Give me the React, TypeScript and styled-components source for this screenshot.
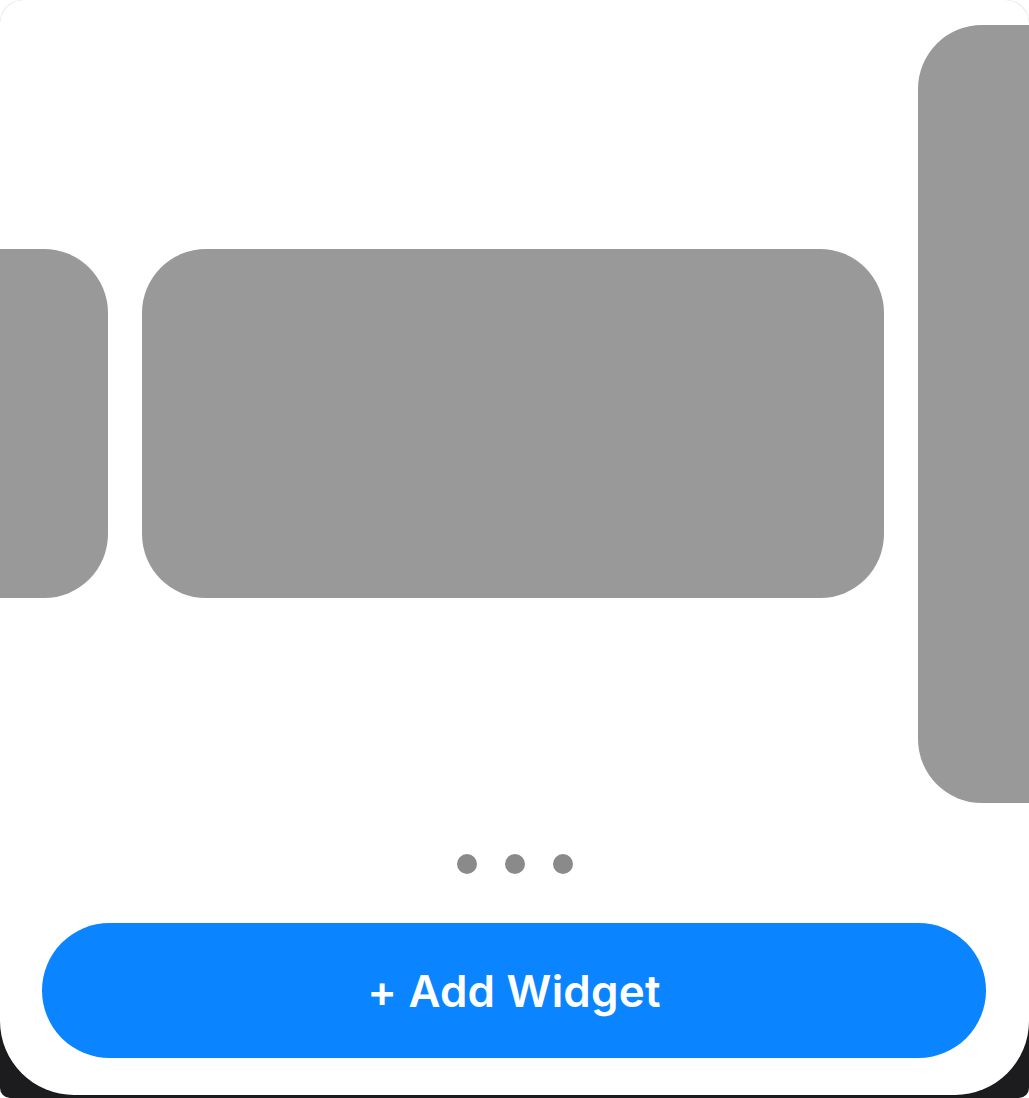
import React from "react";
import styled, { createGlobalStyle } from "styled-components";

const Global = createGlobalStyle`
  html, body { margin: 0; padding: 0; background: #ffffff; }
  body { font-family: Inter, "Noto Sans", "Liberation Sans", sans-serif; }
`;

const Frame = styled.div`
  width: 1029px;
  height: 1098px;
  border-radius: 22px 22px 10px 10px;
  background: linear-gradient(to bottom, #ffffff 0%, #ffffff 60%, #1c1c1e 60%, #1c1c1e 100%);
  overflow: hidden;
`;

const Card = styled.div`
  width: 1029px;
  height: 1095px;
  box-sizing: border-box;
  background: #ffffff;
  border-radius: 24px 24px 74px 74px;
  box-shadow: 0 0 0 1px rgba(0, 0, 0, 0.12);
  overflow: hidden;
  display: flex;
  flex-direction: column;
  align-items: center;
  padding-top: 25px;
`;

const Track = styled.div`
  width: 100%;
  display: grid;
  grid-template-columns: 1fr 742px 1fr;
  column-gap: 34px;
  padding-right: 3px;
  box-sizing: border-box;
  height: 778px;
  align-items: start;
`;

const Slot = styled.div<{ $align: "start" | "center" | "end" }>`
  display: flex;
  justify-content: ${(p) =>
    p.$align === "start" ? "flex-start" : p.$align === "end" ? "flex-end" : "center"};
  min-width: 0;
`;

const Widget = styled.div<{ $w: number; $h: number; $top: number }>`
  flex: none;
  width: ${(p) => p.$w}px;
  height: ${(p) => p.$h}px;
  margin-top: ${(p) => p.$top}px;
  background: #999999;
  border-radius: 64px;
`;

const Dots = styled.div`
  display: flex;
  gap: 28px;
  margin-top: 51px;
`;

const Dot = styled.span`
  width: 20px;
  height: 20px;
  border-radius: 50%;
  background: #8a8a8a;
`;

const AddButton = styled.button`
  align-self: flex-start;
  margin: 49px 0 0 42px;
  width: 944px;
  height: 135px;
  border: none;
  border-radius: 68px;
  background: #0a84ff;
  color: #ffffff;
  font-family: Inter, "Noto Sans", "Liberation Sans", sans-serif;
  font-size: 44px;
  font-weight: 600;
  letter-spacing: 0.2px;
  display: flex;
  align-items: center;
  justify-content: center;
  cursor: pointer;
`;

export default function App() {
  return (
    <>
      <Global />
      <Frame>
        <Card>
          <Track>
            <Slot $align="end">
              <Widget $w={742} $h={349} $top={224} />
            </Slot>
            <Slot $align="center">
              <Widget $w={742} $h={349} $top={224} />
            </Slot>
            <Slot $align="start">
              <Widget $w={360} $h={778} $top={0} />
            </Slot>
          </Track>
          <Dots>
            <Dot />
            <Dot />
            <Dot />
          </Dots>
          <AddButton>+ Add Widget</AddButton>
        </Card>
      </Frame>
    </>
  );
}
